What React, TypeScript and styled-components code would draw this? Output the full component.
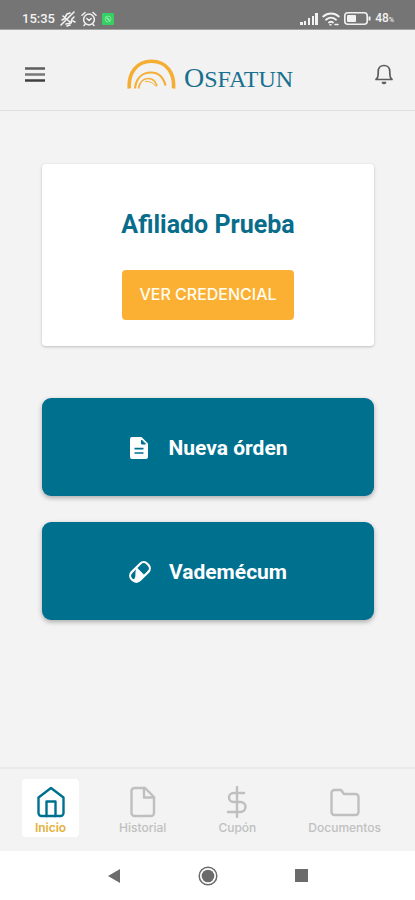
import React from "react";
import styled, { createGlobalStyle } from "styled-components";

const teal = "#00708f";
const amber = "#fbb034";

const GlobalStyle = createGlobalStyle`
  *, *::before, *::after { box-sizing: border-box; }
  body { margin: 0; background: #f3f3f3; font-family: Roboto, sans-serif; }
  svg { display: block; flex: none; }
  button { border: 0; padding: 0; background: none; font: inherit; cursor: pointer; }
  a { text-decoration: none; }
`;

const Page = styled.div`
  display: flex;
  flex-direction: column;
  min-height: 100vh;
  background: #f3f3f3;
`;

const StatusBar = styled.div`
  display: flex;
  align-items: center;
  justify-content: space-between;
  height: 30px;
  padding: 8px 21px 0 22px;
  background: #757575;
  border-bottom: 1px solid #a2a2a2;
  color: #f2f2f2;
`;

const StatusGroup = styled.div`
  display: flex;
  align-items: center;
  gap: 4px;
`;

const StatusText = styled.span`
  font: 500 13px/16px Roboto, sans-serif;
`;

const BatteryText = styled.span`
  font: 500 12px/16px Roboto, sans-serif;
  small { font-size: 7px; }
`;

const Header = styled.header`
  display: flex;
  align-items: center;
  justify-content: space-between;
  height: 81px;
  padding: 8px 19px 0 22px;
  border-bottom: 1px solid #dedede;
  background: #f2f2f2;
`;

const IconButton = styled.button`
  display: grid;
  place-items: center;
  height: 40px;
  color: #5c5c5c;
`;

const Brand = styled.a`
  display: flex;
  align-items: flex-end;
  gap: 8px;
  color: #17708f;
`;

const BrandName = styled.span`
  display: block;
  font: 24px/20px "Liberation Serif", serif;
  &::first-letter { font-size: 28px; line-height: 20px; }
`;

const Main = styled.main`
  display: flex;
  flex: 1;
  flex-direction: column;
  gap: 26px;
  padding: 53px 41px 26px 42px;
`;

const Card = styled.section`
  display: flex;
  flex-direction: column;
  align-items: center;
  gap: 29px;
  margin-bottom: 26px;
  padding: 45px 16px 26px;
  border-radius: 4px;
  background: #fff;
  box-shadow: 0 1px 3px rgba(0, 0, 0, 0.22);
`;

const MemberName = styled.h1`
  margin: 0;
  color: #086c8b;
  font: 700 25px/32px Roboto, sans-serif;
`;

const CredentialButton = styled.button`
  height: 50px;
  padding: 0 17px 2px;
  border-radius: 4px;
  background: ${amber};
  color: #fffdf2;
  font: 500 16px/20px Inter, sans-serif;
`;

const ActionButton = styled.button`
  display: flex;
  align-items: center;
  justify-content: center;
  gap: 18px;
  height: 98px;
  padding-top: 2px;
  border-radius: 9px;
  background: ${teal};
  box-shadow: 0 2px 5px rgba(0, 0, 0, 0.3);
  color: #fff;
  font: 700 21px/28px Roboto, sans-serif;
`;

const TabBar = styled.nav`
  display: flex;
  align-items: flex-start;
  justify-content: space-between;
  height: 84px;
  padding: 10px 22px 0;
  border-top: 2px solid #e9e9e9;
`;

const Tab = styled.a<{ $active?: boolean }>`
  display: flex;
  flex-direction: column;
  align-items: center;
  justify-content: flex-end;
  gap: 3px;
  min-width: 57px;
  height: 58px;
  padding: 0 12px 2px;
  border-radius: 4px;
  background: ${(p) => (p.$active ? "#fff" : "transparent")};
  color: ${(p) => (p.$active ? teal : "#bfbfbf")};
`;

const TabLabel = styled.span<{ $active?: boolean }>`
  color: ${(p) => (p.$active ? "#e3b13c" : "#c0c0c0")};
  font: ${(p) => (p.$active ? 600 : 500)} 12px/14px Inter, sans-serif;
`;

const SystemBar = styled.div`
  display: flex;
  align-items: center;
  justify-content: center;
  gap: 70px;
  height: 49px;
  background: #fff;
  color: #6b6b6b;
`;

const SystemButton = styled.button`
  display: grid;
  place-items: center;
  width: 24px;
  height: 32px;
  color: inherit;
`;

const stroke = {
  fill: "none",
  stroke: "currentColor",
  strokeLinecap: "round",
  strokeLinejoin: "round",
} as const;

const MutedBell = () => (
  <svg width="18" height="16" viewBox="0 0 18 16" {...stroke} strokeWidth="1.6">
    <path d="M2 14 15 1M3 9l2-1 3-5 3-1M7 13l5-1 1-4 2-2M8 15l3-1M4 5l7 6M14 10l2 1" />
  </svg>
);

const AlarmClock = () => (
  <svg width="16" height="16" viewBox="0 0 16 16" {...stroke} strokeWidth="1.5">
    <circle cx="8" cy="8.5" r="5.4" />
    <path d="M1 4.2 4 1.5M15 4.2 12 1.5M5.8 7.5 8 9.5l2.2-2M4 13.5l-1 1M12 13.5l1 1" />
  </svg>
);

const GreenApp = () => (
  <svg width="14" height="12" viewBox="-1 0 14 12" fill="none">
    <rect width="12" height="12" rx="1" fill="#35cf63" />
    <circle cx="6" cy="6" r="3" stroke="#7de898" strokeWidth="1" />
    <path d="m4.5 4.5 3 3" stroke="#a5f2b8" strokeWidth="1.2" />
  </svg>
);

const Signal = () => (
  <svg width="18" height="12" viewBox="0 0 18 12" fill="currentColor">
    <path d="M0 9h3v3H0zM4 8h2v4H4zM8 5h2v7H8zM12 3h2v9h-2zM15 0h3v12h-3z" />
  </svg>
);

const Wifi = () => (
  <svg width="18" height="14" viewBox="0 0 18 14" {...stroke} strokeWidth="1.8">
    <path d="M1.2 4.5c4.5-4 11.1-4 15.6 0M4 7.7c3-2.5 7-2.5 10 0M7 10.5c1.2-.9 2.8-.9 4 0" />
    <path d="M8 12.8h1M13 12.5h3" strokeWidth="1.5" />
  </svg>
);

const Battery = () => (
  <svg width="27" height="13" viewBox="0 0 27 13" fill="none">
    <rect x=".8" y=".8" width="22.4" height="11.4" rx="3" stroke="currentColor" strokeWidth="1.6" />
    <rect x="3" y="3" width="9" height="7" rx="1" fill="currentColor" />
    <path d="M25.5 4.5v4" stroke="currentColor" strokeWidth="2" />
  </svg>
);

const MenuLines = () => (
  <svg width="26" height="18" viewBox="0 0 26 18" fill="none" strokeWidth="2.5">
    <path d="M3 3.5h20" stroke="#5d5d5d" />
    <path d="M3 9.5h20" stroke="#777" />
    <path d="M3 15.5h20" stroke="#3f3f3f" />
  </svg>
);

const Bell = () => (
  <svg width="24" height="24" viewBox="0 0 24 24" {...stroke} strokeWidth="1.7">
    <path d="M4 17.500c1.800-1.500 2.200-2.500 2.200-5.500V9.500C6.200 6 8.500 3.500 12 3.500S17.800 6 17.800 9.500V12c0 3 .4 4 2.200 5.500z" />
    <path d="M10.500 20.500c.7 1.200 2.300 1.200 3 0z" fill="currentColor" />
  </svg>
);

const LogoArcs = () => (
  <svg width="49" height="30" viewBox="0 0 49 30" fill="none" stroke="#f5ae34">
    <path d="M2.300 29.500C1.200 14 9.500 2.200 24.500 2.200S47.800 14 46.500 29.500" strokeWidth="3.600" />
    <path d="M8 29.500C9 20 14.500 13.500 24 13.500c8 0 12.500 5 14.500 13" strokeWidth="2.200" />
    <path d="M11.500 29.500c1-6 4.500-10 10-10 4.500 0 7 2.500 8.500 7.500" strokeWidth="1.600" />
    <path d="M18 22.500c4.500-.5 8.500 1.500 11 5" strokeWidth="1" />
  </svg>
);

const FileFilled = () => (
  <svg width="22" height="22" viewBox="-2 0 22 22" fill="#fff">
    <path d="M2 0h9.500L18 6.500V20a2 2 0 0 1-2 2H2a2 2 0 0 1-2-2V2a2 2 0 0 1 2-2z" />
    <path d="M11.500 3v4H15.500z" fill={teal} stroke={teal} strokeWidth="1" />
    <path d="M4.500 11.700h9M4.500 16h9" stroke={teal} strokeWidth="1.700" />
  </svg>
);

const Pill = () => (
  <svg width="22" height="22" viewBox="0 0 22 22">
    <g transform="rotate(-45 11 11)">
      <rect x="0" y="5.200" width="22" height="11.600" rx="5" fill="none" stroke="#fff" strokeWidth="2.200" />
      <path d="M12 5.200v11.600H5a5 5 0 0 1-5-5V11c2 1.500 4 .5 5.500-1S8.500 7 12 5.200z" fill="#fff" />
    </g>
  </svg>
);

const House = () => (
  <svg width="28" height="32" viewBox="0 0 28 32" {...stroke} strokeWidth="2.4">
    <path d="M1.500 11.500 14 2l12.500 9.500V27a3 3 0 0 1-3 3h-19a3 3 0 0 1-3-3z" />
    <path d="M9.500 30V15.500h9V30" />
  </svg>
);

const FileOutline = () => (
  <svg width="26" height="32" viewBox="0 0 26 32" {...stroke} strokeWidth="2.4">
    <path d="M4.500 2H15l9 9v16a3 3 0 0 1-3 3H4.500a3 3 0 0 1-3-3V5a3 3 0 0 1 3-3z" />
    <path d="M14 2v9.500h10" />
  </svg>
);

const Dollar = () => (
  <svg width="22" height="32" viewBox="0 0 22 32" {...stroke} strokeWidth="2.4">
    <path d="M11 1v30M18 7H7.500a4.500 4.500 0 0 0 0 9h7a5 5 0 0 1 0 10H2" />
  </svg>
);

const Folder = () => (
  <svg width="30" height="32" viewBox="0 0 30 32" {...stroke} strokeWidth="2.4">
    <path d="M4.500 4H11l3 4h11.500a3 3 0 0 1 3 3v15a3 3 0 0 1-3 3h-21a3 3 0 0 1-3-3V7a3 3 0 0 1 3-3z" />
  </svg>
);

const tabs = [
  { label: "Inicio", Icon: House },
  { label: "Historial", Icon: FileOutline },
  { label: "Cupón", Icon: Dollar },
  { label: "Documentos", Icon: Folder },
];

export default function App() {
  return (
    <Page>
      <GlobalStyle />
      <StatusBar>
        <StatusGroup>
          <StatusText>15:35</StatusText>
          <MutedBell />
          <AlarmClock />
          <GreenApp />
        </StatusGroup>
        <StatusGroup>
          <Signal />
          <Wifi />
          <Battery />
          <BatteryText>48<small>%</small></BatteryText>
        </StatusGroup>
      </StatusBar>
      <Header>
        <IconButton aria-label="Menú"><MenuLines /></IconButton>
        <Brand href="#inicio" aria-label="Osfatun">
          <LogoArcs />
          <BrandName>OSFATUN</BrandName>
        </Brand>
        <IconButton aria-label="Notificaciones"><Bell /></IconButton>
      </Header>
      <Main>
        <Card>
          <MemberName>Afiliado Prueba</MemberName>
          <CredentialButton>VER CREDENCIAL</CredentialButton>
        </Card>
        <ActionButton><FileFilled />Nueva órden</ActionButton>
        <ActionButton><Pill />Vademécum</ActionButton>
      </Main>
      <TabBar>
        {tabs.map(({ label, Icon }, i) => (
          <Tab key={label} href={`#${label.toLowerCase()}`} $active={i === 0}>
            <Icon />
            <TabLabel $active={i === 0}>{label}</TabLabel>
          </Tab>
        ))}
      </TabBar>
      <SystemBar>
        <SystemButton aria-label="Atrás">
          <svg width="12" height="14" viewBox="0 0 12 14" fill="currentColor"><path d="M12 0v14L0 7z" /></svg>
        </SystemButton>
        <SystemButton aria-label="Inicio del sistema">
          <svg width="20" height="20" viewBox="0 0 20 20">
            <circle cx="10" cy="10" r="8.8" fill="none" stroke="currentColor" strokeWidth="1.5" />
            <circle cx="10" cy="10" r="6.3" fill="currentColor" />
          </svg>
        </SystemButton>
        <SystemButton aria-label="Recientes">
          <svg width="13" height="13" viewBox="0 0 13 13" fill="currentColor"><rect width="13" height="13" /></svg>
        </SystemButton>
      </SystemBar>
    </Page>
  );
}
